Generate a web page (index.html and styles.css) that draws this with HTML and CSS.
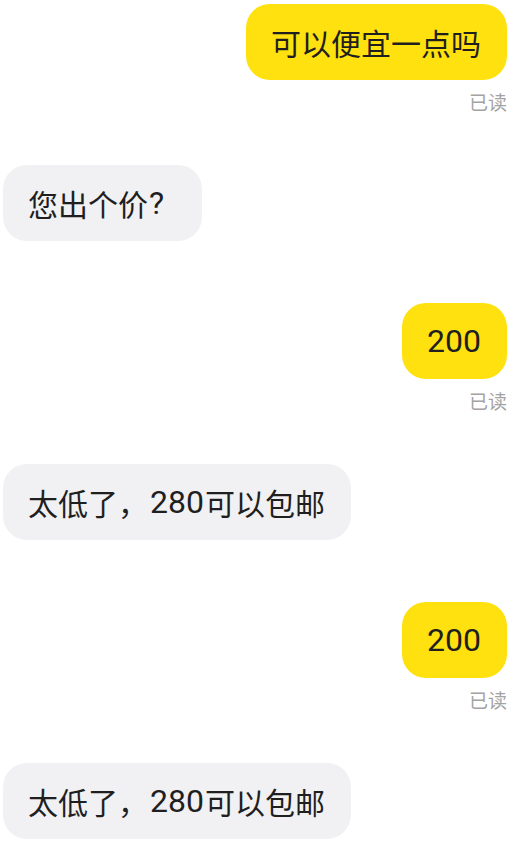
FILE: index.html
```html
<!DOCTYPE html>
<html lang="zh-CN">
<head>
<meta charset="utf-8">
<link rel="stylesheet" href="styles.css">
</head>
<body>
<div class="chat">
  <div class="msg out">
    <div class="bubble">可以便宜一点吗</div>
    <div class="read">已读</div>
  </div>
  <div class="msg in">
    <div class="bubble">您出个价<span class="lat q">?</span></div>
  </div>
  <div class="msg out">
    <div class="bubble"><span class="lat">200</span></div>
    <div class="read">已读</div>
  </div>
  <div class="msg in">
    <div class="bubble">太低了，<span class="lat num">280</span>可以包邮</div>
  </div>
  <div class="msg out">
    <div class="bubble"><span class="lat">200</span></div>
    <div class="read">已读</div>
  </div>
  <div class="msg in">
    <div class="bubble">太低了，<span class="lat num">280</span>可以包邮</div>
  </div>
</div>
</body>
</html>
```
FILE: styles.css
```css
html, body {
  margin: 0;
  padding: 0;
  background: #ffffff;
}
body {
  font-family: "Noto Sans CJK SC", "Noto Sans", sans-serif;
  color: #1f1f1f;
}
.chat {
  display: flex;
  flex-direction: column;
  padding: 4px 13px 0 3px;
}
.msg {
  display: flex;
  flex-direction: column;
}
.msg.out {
  align-items: flex-end;
  margin-bottom: 51px;
}
.msg.in {
  align-items: flex-start;
  margin-bottom: 62px;
}
.bubble {
  height: 76px;
  box-sizing: border-box;
  padding: 0 26px 0 25px;
  display: flex;
  align-items: center;
  font-size: 30px;
  border-radius: 24px;
  white-space: nowrap;
}
.lat {
  font-family: Roboto, "Noto Sans CJK SC", sans-serif;
  font-size: 32px;
}
.num {
  margin: 0 1px 0 2px;
}
.q {
  margin-left: 1px;
  margin-right: 12px;
}
.out .bubble {
  background: #ffe10f;
}
.in .bubble {
  background: #f1f1f3;
}
.read {
  margin-top: 10px;
  font-size: 19px;
  line-height: 24px;
  color: #a3a3a3;
}
```
